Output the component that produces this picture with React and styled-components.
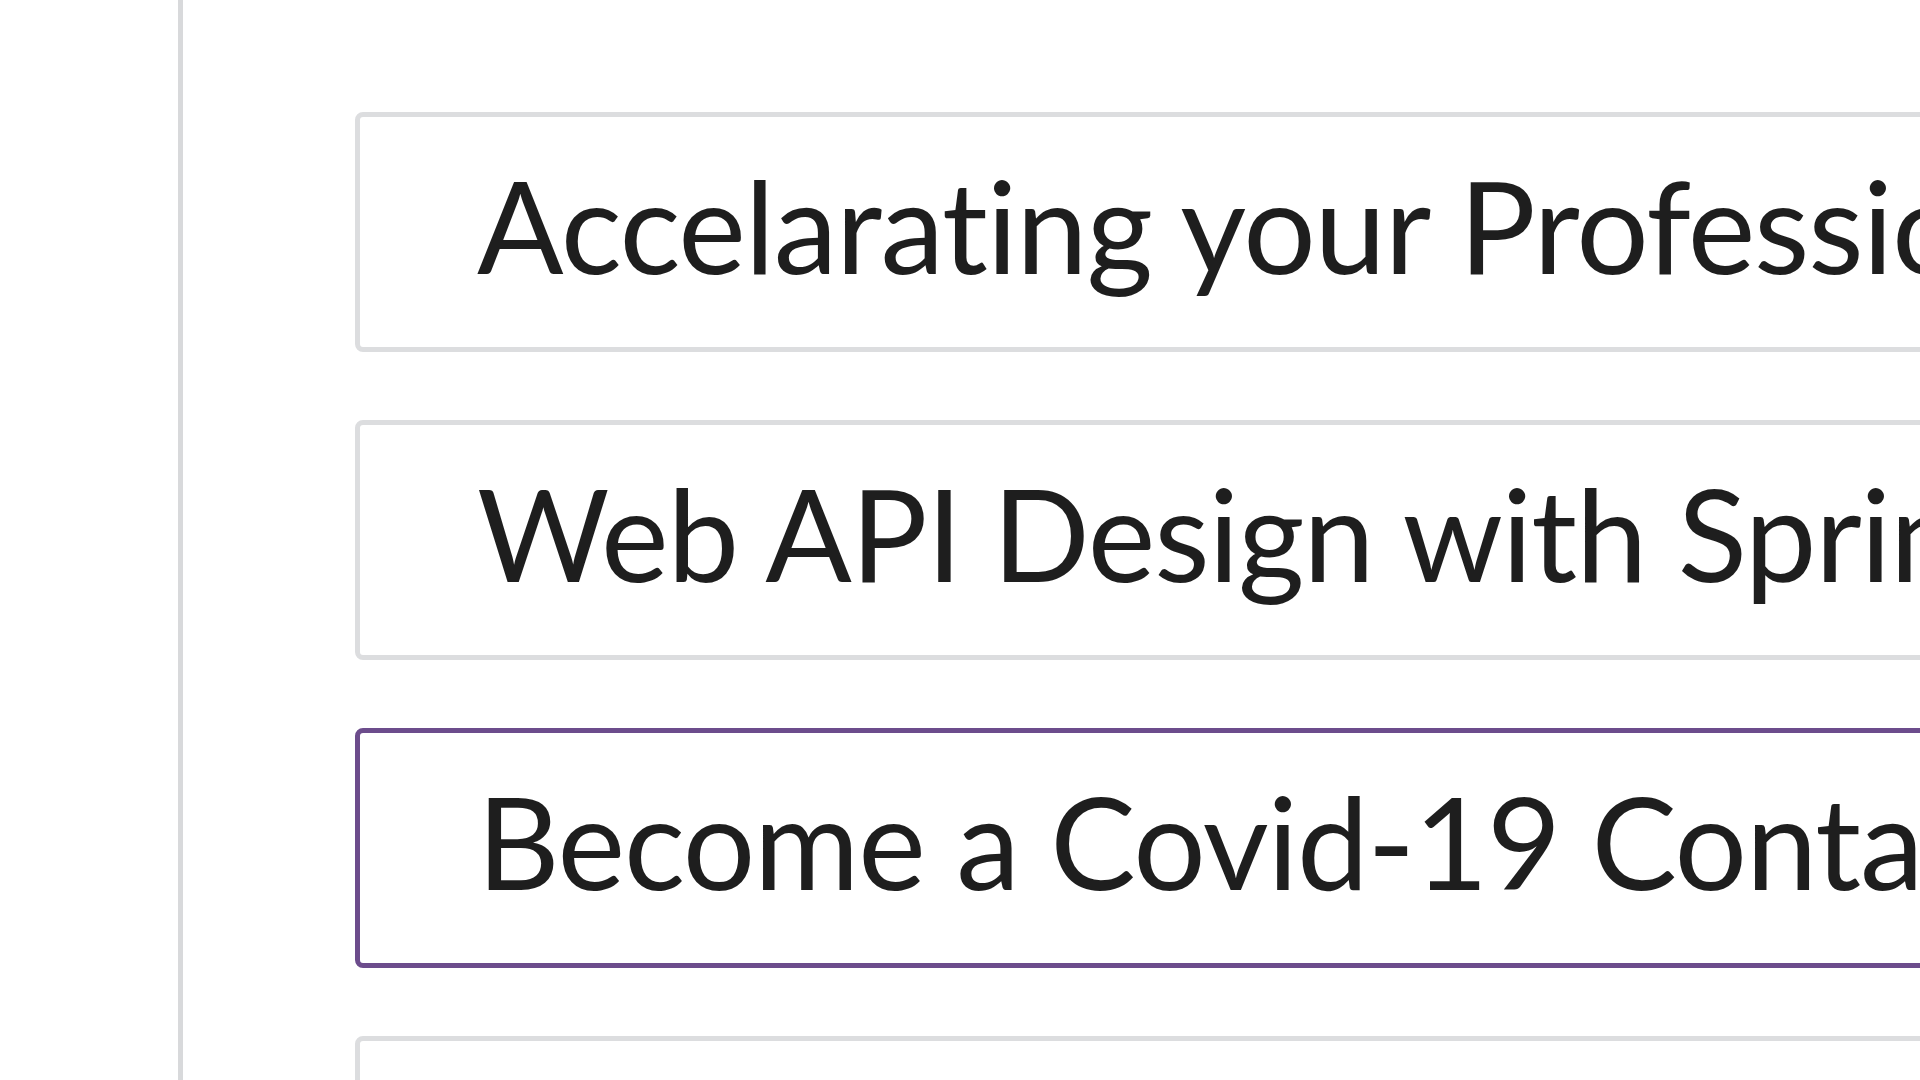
import styled, { createGlobalStyle } from "styled-components";

const GlobalStyle = createGlobalStyle`
  html, body {
    margin: 0;
    padding: 0;
    background: #ffffff;
    overflow: hidden;
  }
  body {
    font-family: Lato, "Open Sans", sans-serif;
  }
`;

const courses = [
  { id: 1, title: "Accelarating your Professional Career" },
  { id: 2, title: "Web API Design with Spring Boot" },
  { id: 3, title: "Become a Covid-19 Contact Tracer", selected: true },
  { id: 4, title: "Introduction to Data Science" },
];

function App() {
  return (
    <>
      <GlobalStyle />
      <StyledPage>
        <StyledSidebar />
        <StyledList>
          {courses.map((c) => (
            <StyledCourse key={c.id} $selected={c.selected}>
              <StyledTitle>{c.title}</StyledTitle>
            </StyledCourse>
          ))}
        </StyledList>
      </StyledPage>
    </>
  );
}

const StyledPage = styled.div`
display: flex;
width: 1920px;
height: 1080px;
overflow: hidden;`;

const StyledSidebar = styled.aside`
flex: 0 0 178px;
border-right: 5px solid #d8d9db;`;

const StyledList = styled.main`
display: flex;
flex-direction: column;
gap: 68px;
padding: 112px 0 0 172px;`;

const StyledCourse = styled.div`
box-sizing: border-box;
width: 2200px;
height: 240px;
flex-shrink: 0;
display: flex;
align-items: center;
padding: 0 0 14px 117px;
border: 5px solid ${(p) => (p.$selected ? "#6c4c8c" : "#dcdddf")};
border-radius: 8px;
background: #fff;`;

const StyledTitle = styled.h2`
margin: 0;
font-weight: 400;
font-size: 128px;
line-height: 1;
letter-spacing: -1.2px;
color: #1e1e1e;
white-space: nowrap;`;

export default App;
